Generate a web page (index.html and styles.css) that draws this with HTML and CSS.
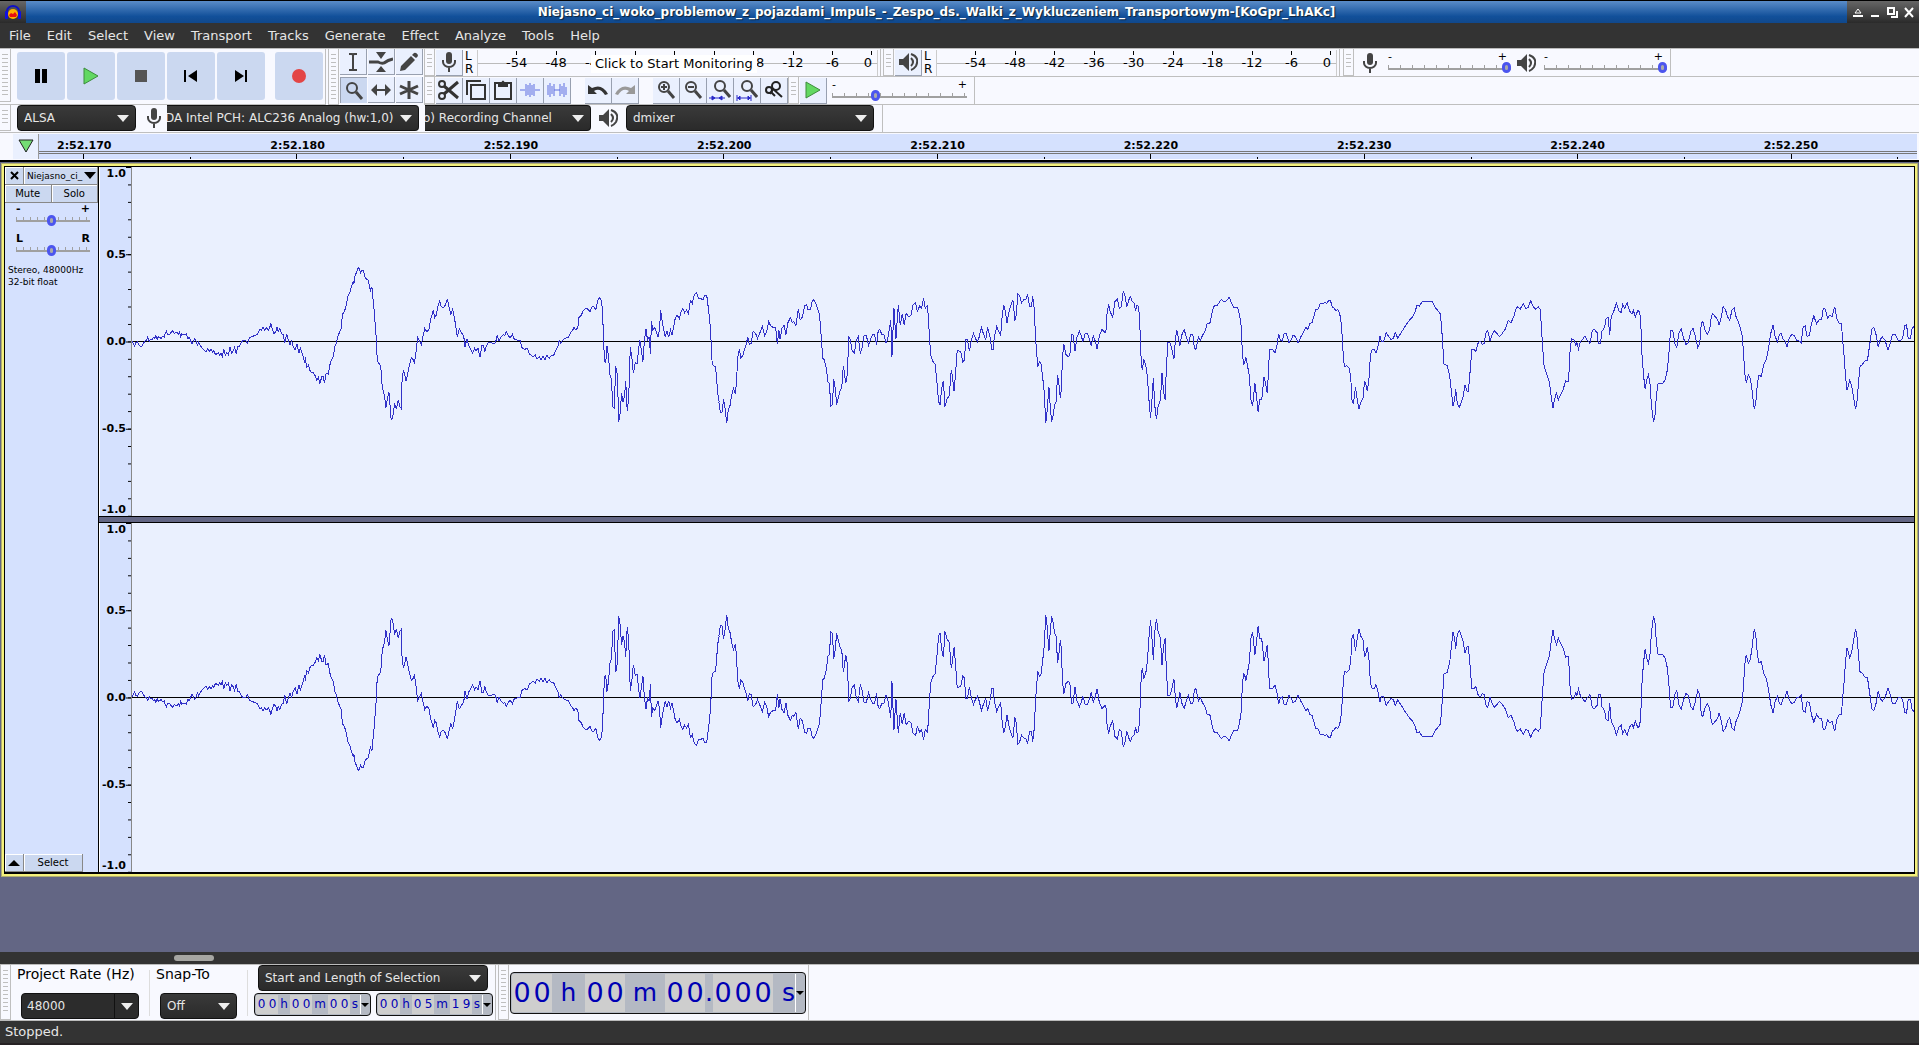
FILE: index.html
```html
<!DOCTYPE html>
<html lang="en">
<head>
	<meta charset="UTF-8">
	<title>Audacity</title>
	<link rel="stylesheet" href="styles.css">
</head>
<body>

<!-- shared shapes -->
<svg class="defs" width="0" height="0">
	<defs>
		<symbol id="mic" viewBox="0 0 20 22">
			<rect x="7" y="1" width="6" height="12" rx="3" fill="#444" />
			<path d="M4 9v2a6 5 0 0 0 12 0V9M10 16v5" fill="none" stroke="#444" stroke-width="2" />
		</symbol>
		<symbol id="speaker" viewBox="0 0 20 20">
			<path d="M1 7h4l6-6v18l-6-6H1z" fill="#444" />
			<path d="M13 6q4 4 0 8M13 2q9 3 5 12q-2 3-5 4" fill="none" stroke="#444" stroke-width="2" />
		</symbol>
		<symbol id="lens" viewBox="0 0 20 20">
			<circle cx="8" cy="7" r="5" fill="none" stroke="#444" stroke-width="2" />
			<path d="M12 11l6 7" stroke="#444" stroke-width="3" />
		</symbol>
		<symbol id="undo" viewBox="0 0 22 20">
			<path d="M1 5v9h9l-3-3q6-4 11 4l3-1Q15 3 5 8z" fill="currentColor" />
		</symbol>
		<!-- three sections of the recording, zero line at y=174 -->
		<g id="wave">
			<polyline transform="translate(-13 73) scale(.3827 .3333)" points="34,304 38,312 41,318 44,308 48,306 52,314 57,320 61,317 65,308 69,302 72,300 75,292 79,304 83,298 86,300 90,292 93,296 96,287 100,298 103,290 107,292 110,297 113,290 118,291 121,279 124,274 127,283 131,284 134,281 137,276 141,272 144,281 147,279 151,276 155,284 158,276 161,290 164,282 168,284 173,284 176,281 180,296 183,290 187,302 191,311 195,304 198,295 202,304 205,319 208,307 213,318 218,325 223,331 228,335 232,327 236,335 240,328 244,336 248,332 252,344 257,340 260,337 263,346 267,340 270,350 274,328 278,345 282,338 286,344 290,322 294,340 298,334 302,322 306,341 310,321 315,318 320,306 326,300 331,302 336,310 341,293 347,290 354,287 362,282 368,269 372,270 376,262 380,270 386,264 390,270 394,262 397,250 401,270 405,281 410,274 413,261 416,274 420,265 425,282 429,284 433,310 438,282 443,303 447,314 451,303 455,318 460,331 465,312 470,340 474,324 480,345 485,365 487,358 491,382 495,376 499,392 504,398 508,398 512,406 517,421 521,412 525,430 530,410 533,408 537,430 541,400 547,403 551,375 555,360 560,349 564,320 568,310 571,292 575,280 580,268 584,222 589,215 594,195 599,165 603,160 607,140 612,125 614,130 617,105 621,98 625,82 629,88 631,100 635,90 639,92 643,113 647,118 651,120 654,135 657,152 661,142 664,180 667,215 670,262 673,304 674,345 677,369 681,372 684,380 687,430 691,460 694,465 697,505 701,478 705,455 707,470 710,532 713,538 717,520 720,490 724,505 727,495 730,480 734,500 737,505 739,430 743,392 746,400 750,423 754,403 759,375 764,352 768,358 772,367 777,330 780,292 784,300 790,314 795,285 799,265 804,275 810,268 815,235 821,212 825,232 829,225 834,195 838,182 842,200 848,203 853,195 858,176 862,200 867,222 872,208 877,238 880,258 884,290 889,267 895,278 901,290 904,322 909,296 914,318 919,328 924,340 929,325 933,333 938,325 943,352 948,318 952,318 956,333 960,318 965,308 972,306 978,312 984,308 988,286 993,303 998,292 1004,284 1008,286 1012,275 1017,286 1022,294 1028,282 1033,298 1040,300 1048,302 1053,323 1060,328 1067,325 1072,342 1077,346 1082,350 1088,345 1092,357 1098,350 1103,360 1108,349 1113,360 1118,346 1124,355 1130,346 1136,345 1141,333 1147,318 1150,302 1154,310 1160,300 1166,295 1174,292 1180,278 1185,272 1189,262 1194,270 1199,262 1202,232 1208,226 1213,212 1220,205 1226,208 1231,215 1236,200 1241,200 1246,210 1251,182 1256,172 1261,182 1264,225 1266,300 1269,365 1272,368 1275,318 1279,350 1283,405 1287,418 1290,500 1294,505 1298,378 1302,405 1306,545 1310,515 1313,460 1317,485 1321,470 1324,423 1328,514 1332,470 1336,322 1340,350 1344,400 1349,368 1354,370 1358,325 1361,300 1365,330 1369,366 1373,300 1377,268 1381,300 1385,292 1389,343 1391,243 1395,270 1400,262 1404,275 1409,292 1413,260 1415,210 1419,240 1423,268 1427,290 1432,272 1436,292 1441,270 1445,285 1449,262 1454,232 1459,226 1464,236 1468,218 1473,206 1478,218 1483,210 1488,222 1493,182 1498,190 1503,165 1509,157 1514,175 1520,175 1526,180 1530,166 1536,168 1540,205 1544,245 1547,300 1550,372 1555,378 1559,380 1562,425 1565,465 1568,485" />
			<polyline transform="translate(567 73) scale(.3954 .3333)" points="50,485 54,518 58,518 62,478 66,505 70,550 74,510 79,495 82,470 87,445 92,463 95,420 98,352 102,328 106,355 111,345 116,325 120,312 123,290 127,313 132,310 137,274 143,280 148,295 153,282 160,258 166,288 171,275 176,245 181,257 187,262 194,262 198,313 202,270 205,298 210,265 215,255 220,284 225,248 231,233 236,248 240,245 245,258 251,208 256,240 262,230 267,198 272,193 276,210 282,210 286,186 290,178 295,190 300,205 305,225 309,290 313,355 317,360 322,385 326,425 330,430 333,498 337,495 341,418 345,450 348,494 353,470 358,448 361,445 365,378 368,400 371,430 375,405 379,292 383,300 387,330 393,340 398,300 403,290 408,342 413,320 417,288 423,286 429,316 434,298 440,282 444,283 449,314 453,275 457,268 463,285 468,285 473,310 477,300 481,270 485,240 488,350 491,260 493,203 498,298 504,195 509,255 514,222 519,255 524,220 530,230 536,226 541,195 548,188 552,215 558,198 563,205 568,173 572,205 577,198 580,225 583,300 587,350 592,365 597,372 602,430 606,485 610,496 613,450 618,422 622,500 627,478 633,467 638,390 641,410 645,452 649,400 653,330 657,333 662,335 667,365 671,360 675,300 679,300 684,333 689,300 694,280 699,295 704,305 709,290 714,262 719,280 725,300 730,262 735,285 741,330 744,328 747,290 753,260 758,275 763,285 767,225 771,195 775,215 779,250 784,215 789,195 794,180 799,242 803,220 806,162 810,165 816,188 821,180 827,178 831,163 836,200 841,200 844,168 848,210 851,290 854,340 857,380 861,365 865,372 869,410 873,455 877,548 880,520 885,440 889,510 892,545 896,525 899,495 903,485 907,405 911,440 914,475 917,440 919,350 923,313 928,343 934,350 938,345 942,285 946,285 951,332 956,292 962,274 966,285 971,305 977,280 983,282 988,300 992,317 997,288 1002,303 1007,328 1012,290 1019,268 1024,275 1029,278 1032,220 1036,193 1040,215 1046,232 1052,185 1058,178 1063,205 1068,200 1073,153 1077,165 1082,200 1087,180 1091,170 1096,185 1101,190 1104,212 1108,195 1112,200 1115,260 1118,350 1121,390 1125,358 1130,375 1134,410 1138,480 1142,535 1145,490 1149,415 1153,500 1157,538 1161,500 1167,480 1171,400 1175,455 1179,480 1182,380 1186,308 1191,308 1196,328 1201,358 1205,300 1208,270 1212,290 1216,317 1221,285 1227,268 1232,290 1238,308 1243,285 1249,283 1253,325 1257,328 1263,290 1268,300 1274,285 1281,270 1285,252 1293,248 1298,215 1303,198 1309,198 1316,187 1321,178 1328,185 1334,182 1341,172 1347,190 1353,203 1362,203 1367,225 1371,258 1374,330 1377,373 1380,370 1383,352 1387,375 1392,410 1396,480 1400,498 1406,430 1410,470 1414,515 1418,480 1423,480 1429,412 1433,430 1437,460 1440,400 1443,328 1450,328 1457,338 1462,315 1466,281 1470,300 1475,303 1480,281 1486,282 1492,308 1497,300 1503,285 1509,292 1515,308 1518,303" />
			<polyline transform="translate(1167 73) scale(.3948 .3333)" points="0,303 5,290 12,275 18,262 22,268 28,250 33,248 38,228 43,207 48,208 54,190 60,190 66,188 71,190 75,181 80,183 84,200 89,205 93,212 98,208 103,220 107,250 110,300 113,365 116,380 121,377 127,385 131,410 134,480 138,492 143,440 147,475 152,508 157,485 162,475 166,425 169,430 173,453 177,420 181,345 185,330 190,328 195,340 200,320 205,287 209,305 214,305 221,278 227,290 233,298 239,295 244,278 250,294 257,282 264,268 273,252 280,240 287,232 294,215 299,195 305,198 312,185 320,184 330,186 338,184 345,203 352,212 358,222 361,260 364,310 367,372 376,378 382,410 387,465 390,497 394,480 397,448 401,490 406,502 411,488 416,470 420,435 425,452 429,455 433,400 438,328 443,328 448,335 454,308 459,303 464,313 469,310 473,280 478,272 484,303 489,285 495,272 501,280 508,290 515,280 522,268 530,242 537,248 544,230 550,205 554,200 560,208 568,190 574,205 580,203 587,182 593,200 600,208 606,200 611,208 614,260 617,320 621,380 628,405 634,425 639,470 643,505 648,475 652,460 657,480 662,465 669,450 675,423 682,425 685,380 687,320 691,297 697,300 701,315 704,308 708,327 713,305 719,298 724,288 730,300 737,310 743,272 748,268 755,278 758,310 764,310 767,275 774,262 778,235 783,232 787,285 791,228 797,215 804,190 810,212 816,218 820,193 825,205 831,188 837,212 843,222 847,212 852,230 858,212 863,215 866,260 869,350 873,410 877,448 881,418 885,405 889,430 893,500 898,546 902,525 905,470 909,432 915,430 922,430 928,418 933,390 937,340 941,272 947,272 952,310 957,322 962,280 968,267 974,295 980,313 986,308 992,275 998,265 1003,285 1010,322 1015,310 1019,250 1023,245 1028,270 1034,283 1040,270 1044,232 1048,220 1054,230 1060,238 1064,255 1069,235 1074,200 1080,208 1086,232 1091,240 1097,210 1102,203 1107,230 1113,245 1118,265 1123,290 1126,340 1129,400 1133,430 1138,405 1143,415 1148,455 1153,507 1157,490 1161,430 1165,405 1171,410 1177,375 1184,358 1190,320 1195,280 1201,255 1206,290 1212,305 1217,283 1221,280 1226,298 1231,303 1236,320 1242,293 1249,282 1255,288 1261,302 1267,303 1272,308 1277,260 1282,258 1287,290 1293,285 1298,250 1304,228 1311,252 1318,238 1324,238 1328,205 1333,207 1339,235 1344,226 1350,230 1357,200 1362,235 1368,250 1374,252 1377,300 1381,350 1384,405 1388,450 1392,435 1395,420 1400,440 1405,475 1410,508 1414,480 1417,430 1421,380 1428,372 1434,362 1440,360 1446,310 1451,268 1456,262 1461,280 1467,320 1472,300 1477,290 1484,300 1492,330 1498,308 1503,285 1510,283 1517,300 1523,303 1529,295 1534,258 1539,255 1543,295 1549,295 1553,265 1557,260" />
		</g>
	</defs>
</svg>

<header class="titlebar">
	<span class="app-icon">
		<svg width="18" height="16" viewBox="0 0 18 16">
			<path d="M3 9V7a6 5 0 0 1 12 0v2" fill="none" stroke="#1010c8" stroke-width="2" />
			<circle cx="9" cy="10" r="5" fill="#ffb000" />
			<path d="M5 11l2-2 2 1 2-2 2 3-1 2H6z" fill="#e81010" />
			<rect x="1" y="7" width="3" height="8" rx="1" fill="#1010e0" />
			<rect x="14" y="7" width="3" height="8" rx="1" fill="#1010e0" />
		</svg>
	</span>
	<h1>Niejasno_ci_woko_problemow_z_pojazdami_Impuls_-_Zespo_ds._Walki_z_Wykluczeniem_Transportowym-[KoGpr_LhAKc]</h1>
	<div class="window-buttons">
		<button aria-label="Shade"><svg width="12" height="12" viewBox="0 0 12 12"><path d="M3 7l3-4 3 4z" fill="none" stroke="#fff" /><path d="M1 10h10" stroke="#fff" stroke-width="2" /></svg></button>
		<button aria-label="Minimize"><svg width="12" height="12" viewBox="0 0 12 12"><path d="M2 10h8" stroke="#fff" stroke-width="2" /></svg></button>
		<button aria-label="Restore"><svg width="12" height="12" viewBox="0 0 12 12"><path d="M2 2h6v6H2zM5 11h6V5" fill="none" stroke="#fff" stroke-width="2" /></svg></button>
		<button aria-label="Close"><svg width="12" height="12" viewBox="0 0 12 12"><path d="M2 2l8 9M10 2l-8 9" stroke="#fff" stroke-width="2" /></svg></button>
	</div>
</header>

<nav class="menubar">
	<button>File</button>
	<button>Edit</button>
	<button>Select</button>
	<button>View</button>
	<button>Transport</button>
	<button>Tracks</button>
	<button>Generate</button>
	<button>Effect</button>
	<button>Analyze</button>
	<button>Tools</button>
	<button>Help</button>
</nav>

<div class="toolbars">
	<div class="dock">
		<div class="toolbar transport">
			<span class="grip"></span>
			<button aria-label="Pause"><svg width="20" height="20" viewBox="0 0 20 20"><path d="M4 3h5v14H4zM11 3h5v14h-5z" /></svg></button>
			<button aria-label="Play"><svg width="20" height="20" viewBox="0 0 20 20"><path d="M3 2v16l14-8z" fill="#62d862" stroke="#3c8c3c" /></svg></button>
			<button aria-label="Stop"><svg width="20" height="20" viewBox="0 0 20 20"><path d="M4 4h12v12H4z" fill="#555" /></svg></button>
			<button aria-label="Skip to Start"><svg width="20" height="20" viewBox="0 0 20 20"><path d="M3 4h2v12H3zM16 4v12L7 10z" /></svg></button>
			<button aria-label="Skip to End"><svg width="20" height="20" viewBox="0 0 20 20"><path d="M14 4h2v12h-2zM4 4v12l9-6z" /></svg></button>
			<button class="record" aria-label="Record"><svg width="20" height="20" viewBox="0 0 20 20"><circle cx="10" cy="10" r="7" fill="#e34545" /></svg></button>
		</div>
		<div class="toolbar tools">
			<span class="grip"></span>
			<div class="tool-grid">
				<button class="tool" aria-label="Selection Tool"><svg width="20" height="20" viewBox="0 0 20 20"><path d="M6 2h3l1 1 1-1h3M6 18h3l1-1 1 1h3M10 3v14" fill="none" stroke="#444" stroke-width="2" /></svg></button>
				<button class="tool" aria-label="Envelope Tool"><svg width="24" height="20" viewBox="0 0 24 20"><path d="M7 0h10l-5 7zM7 20h10l-5-6z" fill="#444" /><path d="M0 10h9q4 2 6 1q4-3 9-4" fill="none" stroke="#444" stroke-width="3" /></svg></button>
				<button class="tool" aria-label="Draw Tool"><svg width="20" height="20" viewBox="0 0 20 20"><path d="M1 19l1-5L12 4l4 4L6 18zM13 3l2-2q2-1 4 2 0 2-2 3z" fill="#444" /></svg></button>
				<button class="tool active" aria-label="Zoom Tool"><svg width="20" height="20"><use href="#lens" /></svg></button>
				<button class="tool" aria-label="Time Shift Tool"><svg width="22" height="20" viewBox="0 0 22 20"><path d="M1 10l6-6v5h8V4l6 6-6 6v-5H7v5z" fill="#444" /></svg></button>
				<button class="tool" aria-label="Multi-Tool"><svg width="20" height="20" viewBox="0 0 20 20"><path d="M10 1v18M1 6l18 8M1 14l18-8" stroke="#444" stroke-width="3" /></svg></button>
			</div>
		</div>
		<div class="dock-rows">
			<div class="dock-row">
				<div class="toolbar">
					<span class="grip"></span>
					<button class="tool" aria-label="Record Meter"><svg width="20" height="22"><use href="#mic" /></svg></button>
					<div class="lr"><span>L</span><span>R</span></div>
					<div class="meter">
						<span>-54</span><span>-48</span><span>-42</span><span></span><span></span><span></span><span>-18</span><span>-12</span><span>-6</span><span>0</span>
						<button class="monitor">Click to Start Monitoring</button>
					</div>
				</div>
				<div class="toolbar">
					<span class="grip"></span>
					<button class="tool" aria-label="Playback Meter"><svg width="20" height="20"><use href="#speaker" /></svg></button>
					<div class="lr"><span>L</span><span>R</span></div>
					<div class="meter">
						<span>-54</span><span>-48</span><span>-42</span><span>-36</span><span>-30</span><span>-24</span><span>-18</span><span>-12</span><span>-6</span><span>0</span>
					</div>
				</div>
				<div class="toolbar mixer">
					<span class="grip"></span>
					<svg width="20" height="22"><use href="#mic" /></svg>
					<label class="slider"><span>-</span><span>+</span><input type="range" aria-label="Recording Volume" value="100"></label>
					<svg width="20" height="20"><use href="#speaker" /></svg>
					<label class="slider"><span>-</span><span>+</span><input type="range" aria-label="Playback Volume" value="100"></label>
				</div>
			</div>
			<div class="dock-row">
				<div class="toolbar edit">
					<span class="grip"></span>
					<button class="tool" aria-label="Cut"><svg width="22" height="20" viewBox="0 0 22 20"><g fill="none" stroke="#333" stroke-width="2"><circle cx="4" cy="4" r="3" /><circle cx="4" cy="16" r="3" /><path d="M6 6l14 12M6 14L20 2" stroke-width="3" /></g></svg></button>
					<button class="tool" aria-label="Copy"><svg width="22" height="22" viewBox="0 0 22 22"><path d="M2 16V2h14M6 6h14v14H6z" fill="none" stroke="#333" stroke-width="2" /></svg></button>
					<button class="tool" aria-label="Paste"><svg width="20" height="22" viewBox="0 0 20 22"><path d="M2 4h16v16H2z" fill="none" stroke="#333" stroke-width="2" /><path d="M5 4h3q2-5 4 0h3v4H5z" fill="#333" /></svg></button>
					<button class="tool" aria-label="Trim"><svg width="20" height="16" viewBox="0 0 20 16"><path d="M0 8h5M15 8h5M6 2v12M8 3v10M10 1v14M12 3v10M14 2v12" stroke="#5c6ce0" /></svg></button>
					<button class="tool" aria-label="Silence"><svg width="20" height="16" viewBox="0 0 20 16"><path d="M1 3v10M3 1v14M5 4v8M7 2v12M7 8h6M13 2v12M15 4v8M17 1v14M19 5v8" stroke="#5c6ce0" /></svg></button>
					<button class="tool spaced" aria-label="Undo"><svg width="22" height="20" color="#333"><use href="#undo" /></svg></button>
					<button class="tool flip" aria-label="Redo"><svg width="22" height="20" color="#999"><use href="#undo" /></svg></button>
					<button class="tool spaced" aria-label="Zoom In"><svg width="20" height="20" viewBox="0 0 20 20"><use href="#lens" /><path d="M5 7h6M8 4v6" stroke="#444" stroke-width="2" /></svg></button>
					<button class="tool" aria-label="Zoom Out"><svg width="20" height="20" viewBox="0 0 20 20"><use href="#lens" /><path d="M5 7h6" stroke="#444" stroke-width="2" /></svg></button>
					<button class="tool" aria-label="Fit Selection"><svg width="22" height="22" viewBox="0 0 22 22"><use href="#lens" x="3" width="20" height="20" /><path d="M0 19h16M3 17l3 2-3 2zM13 17l-3 2 3 2z" stroke="#2828c8" fill="#2828c8" /></svg></button>
					<button class="tool" aria-label="Fit Project"><svg width="22" height="22" viewBox="0 0 22 22"><use href="#lens" x="3" width="20" height="20" /><path d="M1 16v6M15 16v6M1 19h14M4 17l-2 2 2 2zM12 17l2 2-2 2z" stroke="#2828c8" fill="#2828c8" /></svg></button>
					<button class="tool" aria-label="Zoom Toggle"><svg width="20" height="20" viewBox="0 0 20 20"><g fill="none" stroke="#222" stroke-width="2"><circle cx="5" cy="10" r="3" /><path d="M7 12l4 4M8 8l10 9" /><circle cx="12" cy="6" r="4" /><path d="M9 9l-3 5" /></g></svg></button>
				</div>
				<div class="toolbar speed">
					<span class="grip"></span>
					<button class="tool" aria-label="Play-at-Speed"><svg width="18" height="18" viewBox="0 0 18 18"><path d="M2 1v16l14-8z" fill="#62d862" stroke="#3c8c3c" /></svg></button>
					<label class="slider wide"><span>-</span><span>+</span><input type="range" aria-label="Playback Speed" value="31"></label>
				</div>
			</div>
		</div>
	</div>
	<div class="dock-row device">
		<div class="toolbar">
			<span class="grip"></span>
			<select class="dark host" aria-label="Audio Host"><option>ALSA</option></select>
			<svg width="20" height="22"><use href="#mic" /></svg>
			<select class="dark cut input-device" aria-label="Recording Device"><option>DA Intel PCH: ALC236 Analog (hw:1,0)</option></select>
			<select class="dark cut channels" aria-label="Recording Channels"><option>o) Recording Channel</option></select>
			<svg width="20" height="20"><use href="#speaker" /></svg>
			<select class="dark output" aria-label="Playback Device"><option>dmixer</option></select>
		</div>
	</div>
</div>

<div class="timeline">
	<button class="pin" aria-label="Pinned Play Head"><svg width="16" height="14" viewBox="0 0 16 14"><path d="M1 1h14L8 13z" fill="#74dc74" stroke="#222" /></svg></button>
	<div class="ruler">
		<div class="times">
			<span>2:52.170</span><span>2:52.180</span><span>2:52.190</span><span>2:52.200</span><span>2:52.210</span><span>2:52.220</span><span>2:52.230</span><span>2:52.240</span><span>2:52.250</span>
		</div>
		<div class="ticks">
			<i></i><i></i><i></i><i></i><i></i><i></i><i></i><i></i><i></i><i></i><i></i><i></i><i></i><i></i><i></i><i></i><i></i><i></i>
		</div>
	</div>
</div>

<main class="project">
	<section class="track">
		<aside class="track-panel">
			<div class="panel-row">
				<button class="close" aria-label="Close track"><svg width="9" height="9" viewBox="0 0 9 9"><path d="M1 1l7 7M8 1L1 8" stroke="#000" stroke-width="2" /></svg></button>
				<button class="name">Niejasno_ci_<svg width="12" height="7" viewBox="0 0 12 7"><path d="M0 0h12L6 7z" /></svg></button>
			</div>
			<div class="panel-row">
				<button class="half">Mute</button>
				<button class="half">Solo</button>
			</div>
			<label class="slider small"><span>-</span><span>+</span><input type="range" aria-label="Gain" value="48"></label>
			<label class="slider small"><span>L</span><span>R</span><input type="range" aria-label="Pan" value="48"></label>
			<p>Stereo, 48000Hz<br>32-bit float</p>
			<div class="panel-row bottom">
				<button class="collapse" aria-label="Collapse"><svg width="12" height="6" viewBox="0 0 12 6"><path d="M0 6h12L6 0z" /></svg></button>
				<button class="pick">Select</button>
			</div>
		</aside>
		<div class="channels-view">
			<div class="channel">
				<div class="scale"><span>1.0</span><span>0.5</span><span>0.0</span><span>-0.5</span><span>-1.0</span></div>
				<svg class="waveform" viewBox="0 0 1782 349" preserveAspectRatio="none">
					<line x1="0" x2="1782" y1="174" y2="174" />
					<use href="#wave" />
				</svg>
			</div>
			<div class="channel">
				<div class="scale"><span>1.0</span><span>0.5</span><span>0.0</span><span>-0.5</span><span>-1.0</span></div>
				<svg class="waveform" viewBox="0 0 1782 349" preserveAspectRatio="none">
					<line x1="0" x2="1782" y1="174" y2="174" />
					<use href="#wave" transform="translate(0 348) scale(1 -1)" />
				</svg>
			</div>
		</div>
	</section>
</main>

<div class="scrollbar"><div class="thumb"></div></div>

<footer class="selection">
	<div class="toolbar">
		<span class="grip"></span>
		<div class="field rate">
			<label for="rate">Project Rate (Hz)</label>
			<div class="combo"><input id="rate" type="text" value="48000"><button aria-label="Choose rate"><svg width="12" height="7" viewBox="0 0 12 7"><path d="M0 0h12L6 7z" fill="#eee" /></svg></button></div>
		</div>
		<div class="rule"></div>
		<div class="field snap">
			<label for="snap">Snap-To</label>
			<select id="snap" class="dark"><option>Off</option></select>
		</div>
		<div class="rule"></div>
		<div class="range">
			<select class="dark" aria-label="Selection mode"><option>Start and Length of Selection</option></select>
			<div class="range-times">
				<div class="time"><b>0</b><b>0</b><i class="hour">h</i><b>0</b><b>0</b><i>m</i><b>0</b><b>0</b><i class="sec">s</i><button aria-label="Start format"></button></div>
				<div class="time"><b>0</b><b>0</b><i class="hour">h</i><b>0</b><b>5</b><i>m</i><b>1</b><b>9</b><i class="sec">s</i><button aria-label="Length format"></button></div>
			</div>
		</div>
	</div>
	<div class="toolbar">
		<span class="grip"></span>
		<div class="time big"><b>0</b><b>0</b><i class="hour">h</i><b>0</b><b>0</b><i>m</i><b>0</b><b>0</b><i class="dot">.</i><b>0</b><b>0</b><b>0</b><i class="sec">s</i><button aria-label="Position format"></button></div>
	</div>
</footer>

<div class="status">Stopped.</div>

</body>
</html>
```
FILE: styles.css
```css
* {
	box-sizing: border-box;
}
body {
	margin: 0;
	min-height: 100vh;
	display: flex;
	flex-direction: column;
	background: #333;
	color: #000;
	font: 13px "DejaVu Sans", sans-serif;
	overflow-x: hidden;
}
button, input, select {
	font: inherit;
	color: inherit;
	margin: 0;
	padding: 0;
	border: 0;
	background: none;
}
svg {
	flex: none;
	display: block;
}
.defs {
	position: absolute;
}

/* title and menu */
.titlebar {
	display: flex;
	height: 23px;
	border-top: 1px solid #000;
	background: linear-gradient(#5a8cc8, #12509a 70%, #10488c);
	color: #fff;
}
.titlebar h1 {
	flex: 1;
	margin: 0;
	font-size: 12px;
	line-height: 23px;
	text-align: center;
	white-space: nowrap;
	text-shadow: 1px 1px 1px #123;
}
.app-icon,
.window-buttons {
	display: flex;
	align-items: center;
	justify-content: center;
	background: linear-gradient(#666, #2a2a2a);
}
.app-icon {
	width: 26px;
}
.window-buttons {
	gap: 5px;
	width: 72px;
}
.menubar {
	display: flex;
	gap: 16px;
	height: 25px;
	padding-left: 9px;
	background: #333;
	color: #e6e6e6;
}

/* toolbars */
.toolbars {
	background: #f8f9ff;
	border-top: 1px solid #bbb;
}
.dock,
.dock-row {
	display: flex;
}
.dock-rows {
	flex: 1;
}
.dock-row {
	height: 28px;
	border-bottom: 1px solid #bfbfbf;
}
.toolbar {
	display: flex;
	align-items: center;
	border-right: 1px solid #bfbfbf;
	padding-right: 2px;
	margin-right: 2px;
}
.grip {
	align-self: stretch;
	width: 11px;
	margin-right: 1px;
	border: solid #bfbfbf;
	border-width: 0 1px 1px;
	background: repeating-linear-gradient(#bfbfbf 0 1px, transparent 1px 4px) content-box;
	padding: 5px 2px;
}
.transport {
	height: 56px;
	gap: 2px;
	padding-bottom: 2px;
	border-bottom: 1px solid #bfbfbf;
}
.transport .grip {
	margin-right: 4px;
	border-left: 0;
}
.transport button {
	display: flex;
	align-items: center;
	justify-content: center;
	width: 48px;
	height: 48px;
	border-radius: 3px;
	background: #cbd8f0;
}
.transport .record {
	margin-left: 8px;
}
.tools {
	margin: 0;
	padding: 0;
	border-right: 0;
}
.tool-grid {
	display: grid;
	grid-template-columns: repeat(3, 28px);
	grid-template-rows: 28px 28px;
}
.tool {
	display: flex;
	align-items: center;
	justify-content: center;
	width: 27px;
	height: 26px;
	background: #eaf0fe;
	border: solid #98a0b0;
	border-width: 0 1px 1px 0;
}
.tool.active {
	background: #cbd8f0;
	border-width: 1px 0 0 1px;
}
.tool.spaced {
	margin-left: 14px;
}
.tool.flip svg {
	transform: scaleX(-1);
}
.lr {
	display: flex;
	flex-direction: column;
	width: 12px;
	margin-left: 2px;
	font-size: 12px;
	line-height: 13px;
}
.meter {
	position: relative;
	display: flex;
	width: 401px;
	height: 26px;
	padding: 1px 5px 0 19px;
	border: solid #ccc;
	border-width: 0 1px;
	background: linear-gradient(#bbb, #bbb) 0 13px / 100% 1px no-repeat;
	font-size: 13px;
}
.meter span {
	flex: 2 0 0;
	display: flex;
	flex-direction: column;
	align-items: center;
	line-height: 24px;
	background: linear-gradient(#000, #000) 50% 0 / 1px 4px no-repeat;
}
.meter span:nth-child(10) {
	flex: 1 0 0;
	align-items: flex-end;
	background-position: 100% 0;
}
.monitor {
	position: absolute;
	left: 113px;
	top: 5px;
	padding: 0 4px;
	line-height: 18px;
	background: #fff;
	white-space: nowrap;
}
.mixer {
	gap: 5px;
	margin-left: 1px;
	padding-right: 3px;
}

/* sliders */
.slider {
	display: grid;
	grid-template-columns: 1fr auto;
	width: 126px;
	padding-left: 3px;
	font-size: 11px;
	line-height: 10px;
}
.mixer span:nth-child(2) {
	padding-right: 4px;
}
.slider.wide {
	width: 145px;
	padding: 0 5px 0 5px;
}
.slider input {
	grid-column: 1 / 3;
	-webkit-appearance: none;
	appearance: none;
	width: 100%;
	height: 12px;
	background:
		linear-gradient(#a0a0a0, #a0a0a0) 0 6px / 100% 2px no-repeat,
		repeating-linear-gradient(90deg, #a0a0a0 0 1px, transparent 1px 12px) 0 3px / 100% 4px no-repeat;
}
.slider input::-webkit-slider-thumb {
	-webkit-appearance: none;
	width: 9px;
	height: 11px;
	border: 3px solid #4c55ee;
	border-radius: 5px;
	background: #aaa;
}
.slider.small {
	width: auto;
	margin: 1px 8px 7px 11px;
	padding: 0;
	font-weight: bold;
}
.slider.small input {
	background:
		linear-gradient(#a0a0a0, #a0a0a0) 0 6px / 100% 2px no-repeat,
		repeating-linear-gradient(90deg, #a0a0a0 0 1px, transparent 1px 7px) 0 3px / 100% 4px no-repeat;
}
.edit {
	margin-right: 0;
	padding-right: 0;
	border-right: 0;
}

/* drop-downs */
.dark {
	-webkit-appearance: none;
	appearance: none;
	height: 26px;
	padding: 0 26px 0 6px;
	border: 1px solid #111;
	border-radius: 4px;
	background: url("data:image/svg+xml,%3Csvg xmlns='http://www.w3.org/2000/svg' width='12' height='7'%3E%3Cpath d='M0 0h12L6 7z' fill='%23eee'/%3E%3C/svg%3E") right 6px center no-repeat, linear-gradient(#3a3a3a, #2a2a2a);
	color: #e6e6e6;
	font-size: 12px;
}
.dark.cut {
	padding: 0 20px 0 0;
	border-left: 0;
	border-radius: 0 4px 4px 0;
	text-indent: -2px;
}
.device .grip {
	margin-right: 6px;
	border-left: 0;
}
.device .toolbar {
	padding: 0 8px 1px 0;
}
.host {
	width: 119px;
	margin-right: 8px;
}
.input-device {
	width: 252px;
	margin: 0 6px 0 3px;
}
.channels {
	width: 166px;
	margin-right: 7px;
}
.output {
	width: 248px;
	margin-left: 8px;
}

/* time ruler */
.timeline {
	display: flex;
	height: 29px;
	padding: 1px 2px 1px 13px;
	background: #f8f9ff;
	border-bottom: 2px solid #000;
}
.pin {
	display: flex;
	align-items: center;
	justify-content: center;
	width: 26px;
	padding-bottom: 2px;
	background: #eaf0fe;
	border-right: 1px solid #999;
}
.ruler {
	flex: 1;
	background: #d5e1fe;
	overflow: hidden;
}
.times,
.ticks {
	display: flex;
}
.times {
	height: 20px;
	padding-left: 18px;
	border-bottom: 3px double #777;
	font-size: 11px;
	font-weight: bold;
	line-height: 23px;
}
.times span {
	flex: 0 0 11.47%;
}
.ticks {
	padding-left: 44px;
}
.ticks i {
	flex: 0 0 5.82%;
	height: 6px;
	border-left: 1px solid #000;
}
.ticks i:nth-child(even) {
	height: 3px;
	align-self: flex-end;
}

/* tracks */
.project {
	flex: 1;
	padding: 1px 1px 0 1px;
	background: #636684;
}
.track {
	display: flex;
	border: 3px solid #f4f07c;
	outline: 1px solid #b0ae70;
	outline-offset: -1px;
	padding: 1px 1px 2px 1px;
	background: #000;
}
.track-panel {
	display: flex;
	flex-direction: column;
	width: 98px;
	border-right: 1px solid #000;
	background: #d5e1fe;
	font-size: 10px;
}
.panel-row {
	display: flex;
}
.panel-row button {
	height: 18px;
	border: solid #888;
	border-width: 0 1px 1px 0;
	background: #cbd8f0;
	box-shadow: inset 1px 1px #fff;
}
.panel-row svg {
	margin: auto;
}
.panel-row .close,
.panel-row .collapse {
	width: 19px;
}
.panel-row .name {
	display: flex;
	align-items: center;
	flex: 1;
	min-width: 0;
	padding-left: 3px;
	font-size: 9px;
}
.half {
	flex: 1;
}
.track-panel p {
	margin: 1px 3px;
	font-size: 9px;
	line-height: 12px;
	white-space: nowrap;
}
.bottom {
	margin-top: auto;
}
.pick {
	width: 59px;
}
.channels-view {
	flex: 1;
	display: flex;
	flex-direction: column;
	gap: 7px;
	background: linear-gradient(#000, #000) 0 349px / 100% 1px no-repeat, linear-gradient(#000, #000) 0 355px / 100% 1px no-repeat, #636684;
}
.channel {
	display: flex;
	height: 349px;
	background: #eaf0fe;
}
.scale {
	display: flex;
	flex-direction: column;
	width: 33px;
	padding-right: 5px;
	border-left: 1px solid #fff;
	border-right: 1px solid #888;
	background:
		linear-gradient(#000 1px, transparent 1px) 100% 0 / 5px 25%,
		linear-gradient(#000 1px, transparent 1px) 100% 0 / 3px 5%,
		#d5e1fe;
	background-repeat: repeat-y;
	font-size: 11px;
	font-weight: bold;
	text-align: right;
}
.scale span {
	flex: 2 0 0;
	display: flex;
	align-items: center;
	justify-content: flex-end;
}
.scale span:first-child {
	flex: 1 0 0;
	align-items: flex-start;
}
.scale span:last-child {
	flex: 1 0 0;
	align-items: flex-end;
}
.waveform {
	flex: 1 1 0;
	min-width: 0;
	height: 349px;
}
.waveform line {
	stroke: #000;
	shape-rendering: crispEdges;
}
#wave polyline {
	fill: none;
	stroke: #3232c8;
	vector-effect: non-scaling-stroke;
	shape-rendering: crispEdges;
}
.scrollbar {
	height: 12px;
	padding: 3px 0 0 174px;
}
.thumb {
	width: 40px;
	height: 6px;
	border-radius: 3px;
	background: #a6a6a2;
}

/* selection toolbar */
.selection {
	display: flex;
	height: 57px;
	background: #f8f9ff;
	border: solid #bbb;
	border-width: 1px 0;
}
.selection .grip {
	margin-right: 0;
}
.field {
	display: flex;
	flex-direction: column;
	justify-content: space-between;
	align-self: stretch;
	padding-bottom: 1px;
	font-size: 14px;
	line-height: 18px;
}
.rate {
	width: 132px;
	padding-left: 6px;
}
.combo {
	display: flex;
	width: 118px;
	height: 26px;
	margin-left: 4px;
	border: 1px solid #111;
	border-radius: 4px;
	background: #2c2c2c;
	color: #e6e6e6;
	font-size: 12px;
}
.combo input {
	width: 92px;
	padding-left: 5px;
}
.combo button {
	flex: 1;
	padding-left: 6px;
	border-left: 1px solid #111;
}
.rule {
	width: 1px;
	height: 46px;
	margin: 0 6px;
	background: #ddd;
}
.snap {
	width: 85px;
}
.snap .dark {
	width: 77px;
	margin-left: 4px;
}
.range {
	align-self: stretch;
}
.range > .dark {
	display: block;
	width: 230px;
	margin: 0 0 2px 4px;
}
.range-times {
	display: flex;
	gap: 5px;
}
.time {
	display: flex;
	padding: 1px;
	height: 23px;
	border: 1px solid #111;
	border-radius: 4px;
	background: #b4b9c3;
	color: #0000b4;
	font-size: 12px;
	line-height: 19px;
	text-align: center;
}
.time b {
	width: 11px;
	background: #cecece;
	font-weight: normal;
}
.time i {
	width: 16px;
	font-style: normal;
}
.time .hour {
	width: 12px;
}
.time .sec {
	width: 10px;
}
.time button {
	width: 9px;
	border-left: 1px solid #fff;
}
.time button::before {
	content: "";
	display: block;
	border: 4px solid transparent;
	border-top-color: #000;
	border-bottom: 0;
}
.time.big {
	height: 42px;
	margin-left: 1px;
	font-size: 27px;
	line-height: 38px;
}
.time.big b {
	width: 20px;
}
.time.big i {
	width: 40px;
	font-size: 25px;
}
.time.big .hour {
	width: 33px;
}
.time.big .dot {
	width: 8px;
}
.time.big .sec {
	width: 22px;
	text-align: right;
}

.status {
	height: 24px;
	padding-left: 5px;
	border-bottom: 2px solid #262224;
	color: #e6e6e6;
	line-height: 22px;
}
```
